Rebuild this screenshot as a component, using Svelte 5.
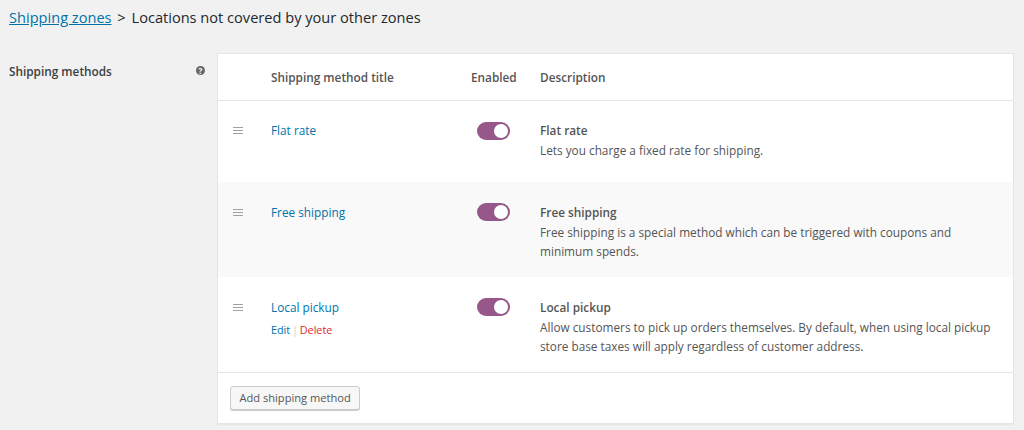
<script>
	const methods = [
		{ title: 'Flat rate', desc: 'Lets you charge a fixed rate for shipping.' },
		{ title: 'Free shipping', desc: 'Free shipping is a special method which can be triggered with coupons and minimum spends.' },
		{ title: 'Local pickup', desc: 'Allow customers to pick up orders themselves. By default, when using local pickup store base taxes will apply regardless of customer address.', actions: true }
	];
</script>

<div class="page">
	<h2 class="crumb"><a href="#zones">Shipping zones</a> <span class="sep">&gt;</span> Locations not covered by your other zones</h2>

	<div class="form-row">
		<div class="side">
			<span class="side-label">Shipping methods</span>
			<span class="help">?</span>
		</div>

		<div class="card">
			<div class="row head">
				<div class="c-handle"></div>
				<div class="c-title">Shipping method title</div>
				<div class="c-enabled">Enabled</div>
				<div class="c-desc">Description</div>
			</div>

			{#each methods as m, i}
				<div class="row method" class:alt={i === 1} class:last={i === 2}>
					<div class="c-handle">
						<span class="handle"><i></i><i></i><i></i></span>
					</div>
					<div class="c-title">
						<a href="#edit" class="name">{m.title}</a>
						{#if m.actions}
							<div class="actions"><a href="#edit">Edit</a> <span class="pipe">|</span> <a href="#delete" class="del">Delete</a></div>
						{/if}
					</div>
					<div class="c-enabled">
						<span class="toggle"><span class="knob"></span></span>
					</div>
					<div class="c-desc">
						<strong>{m.title}</strong>
						<p>{m.desc}</p>
					</div>
				</div>
			{/each}

			<div class="foot">
				<button type="button">Add shipping method</button>
			</div>
		</div>
	</div>
</div>

<style>
	:global(body) {
		background: #f1f1f1;
		font-family: "Open Sans", "Noto Sans", sans-serif;
		color: #555;
	}
	.page {
		height: 430px;
		overflow: hidden;
		padding: 7px 10px 0 9px;
		box-sizing: border-box;
	}
	.crumb {
		margin: 0 0 26px;
		font-size: 14.6px;
		line-height: 20px;
		font-weight: 500;
		color: #23282d;
		white-space: nowrap;
	}
	.crumb a { color: #0073aa; }
	.sep { margin: 0 2px; }
	.form-row { display: flex; }
	.side {
		width: 208px;
		flex: none;
		display: flex;
		justify-content: space-between;
		align-items: flex-start;
		padding: 10px 12px 0 0;
		box-sizing: border-box;
	}
	.side-label {
		font-size: 11.8px;
		line-height: 16px;
		font-weight: 600;
		color: #3a3f44;
	}
	.help {
		width: 9px;
		height: 9px;
		margin-top: 3px;
		border-radius: 50%;
		background: #666;
		color: #fff;
		font-size: 8px;
		line-height: 9px;
		font-weight: 700;
		text-align: center;
	}
	.card {
		width: 797px;
		flex: none;
		height: 371px;
		background: #fff;
		border: 1px solid #e5e5e5;
		box-sizing: border-box;
		box-shadow: 0 1px 1px rgba(0, 0, 0, 0.04);
		display: flex;
		flex-direction: column;
	}
	.row { display: flex; font-size: 11.8px; line-height: 19px; }
	.head {
		height: 47px;
		flex: none;
		align-items: center;
		border-bottom: 1px solid #e5e5e5;
		font-weight: 600;
		color: #555;
		box-sizing: border-box;
	}
	.c-handle { width: 53px; flex: none; padding-left: 15px; box-sizing: border-box; }
	.c-title { width: 200px; flex: none; }
	.c-enabled { width: 69px; flex: none; }
	.c-desc { flex: 1; padding-right: 20px; }
	.method { padding-top: 19px; box-sizing: border-box; height: 81px; }
	.method .c-title, .method .c-desc { padding-top: 1px; }
	.method.alt { background: #f9f9f9; height: 96px; padding-top: 20px; }
	.method.last { height: 96px; padding-top: 20px; border-bottom: 1px solid #e5e5e5; }
	.handle { display: block; width: 10px; margin-top: 7px; }
	.handle i { display: block; height: 1px; background: #a0a0a0; margin-bottom: 2px; }
	.name, .actions a { color: #0073aa; text-decoration: none; }
	.actions { margin-top: 3px; font-size: 10.8px; }
	.actions a.del { color: #e0282e; }
	.pipe { color: #ccc; margin: 0 -1px; }
	.toggle {
		display: block;
		width: 33px;
		height: 18px;
		margin: 2px 0 0 6px;
		background: #96588a;
		border-radius: 9px;
		position: relative;
	}
	.method.alt .toggle, .method.last .toggle { margin-top: 1px; }
	.knob {
		position: absolute;
		top: 2px;
		right: 2px;
		width: 14px;
		height: 14px;
		border-radius: 50%;
		background: #fff;
	}
	.c-desc strong { display: block; font-weight: 600; }
	.c-desc p { margin: 1px 0 0; }
	.foot { padding: 13px 12px; }
	button {
		display: block;
		height: 24px;
		padding: 0 8.5px;
		font: 11.1px/22px "Open Sans", sans-serif;
		color: #555;
		background: #f7f7f7;
		border: 1px solid #ccc;
		border-radius: 3px;
		box-shadow: 0 1px 0 #ccc;
	}
</style>
